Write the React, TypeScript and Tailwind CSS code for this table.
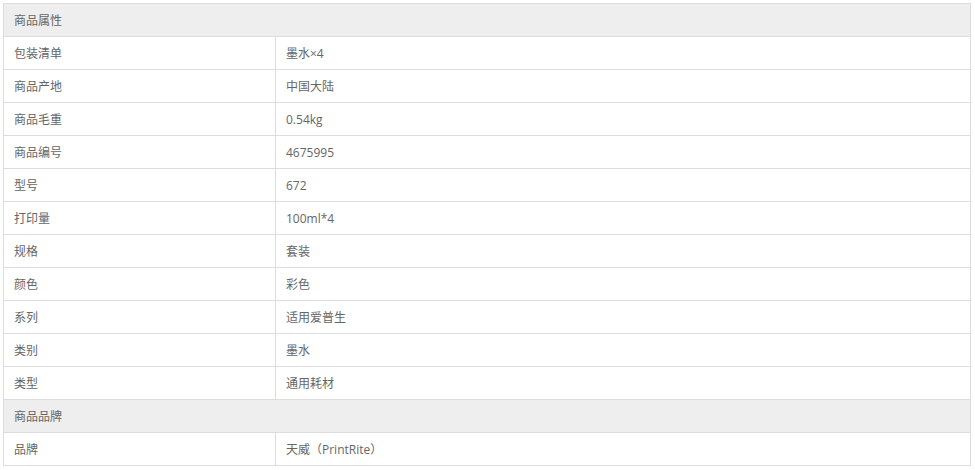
const GROUPS: { title: string; rows: [string, string][] }[] = [
  {
    title: '商品属性',
    rows: [
      ['包装清单', '墨水×4'],
      ['商品产地', '中国大陆'],
      ['商品毛重', '0.54kg'],
      ['商品编号', '4675995'],
      ['型号', '672'],
      ['打印量', '100ml*4'],
      ['规格', '套装'],
      ['颜色', '彩色'],
      ['系列', '适用爱普生'],
      ['类别', '墨水'],
      ['类型', '通用耗材'],
    ],
  },
  {
    title: '商品品牌',
    rows: [['品牌', '天威（PrintRite）']],
  },
];

export default function App() {
  return (
    <div className="bg-white w-[975px] h-[470px] pt-[3px] pl-[3px] font-['Open_Sans','Noto_Sans_CJK_SC',sans-serif] text-[12px] text-[#666]">
      <table className="w-[968px] border-collapse border border-[#ddd]">
        <tbody>
          {GROUPS.map((group) => (
            <>
              <tr key={group.title} className="h-[33px] bg-[#eee]">
                <td colSpan={2} className="border border-[#ddd] pl-[10px] pt-[2px] align-middle">
                  {group.title}
                </td>
              </tr>
              {group.rows.map(([k, v]) => (
                <tr key={k} className="h-[33px]">
                  <td className="w-[272px] border border-[#ddd] pl-[10px] pt-[2px] align-middle">{k}</td>
                  <td className="border border-[#ddd] pl-[10px] pt-[2px] align-middle">{v}</td>
                </tr>
              ))}
            </>
          ))}
        </tbody>
      </table>
    </div>
  );
}
